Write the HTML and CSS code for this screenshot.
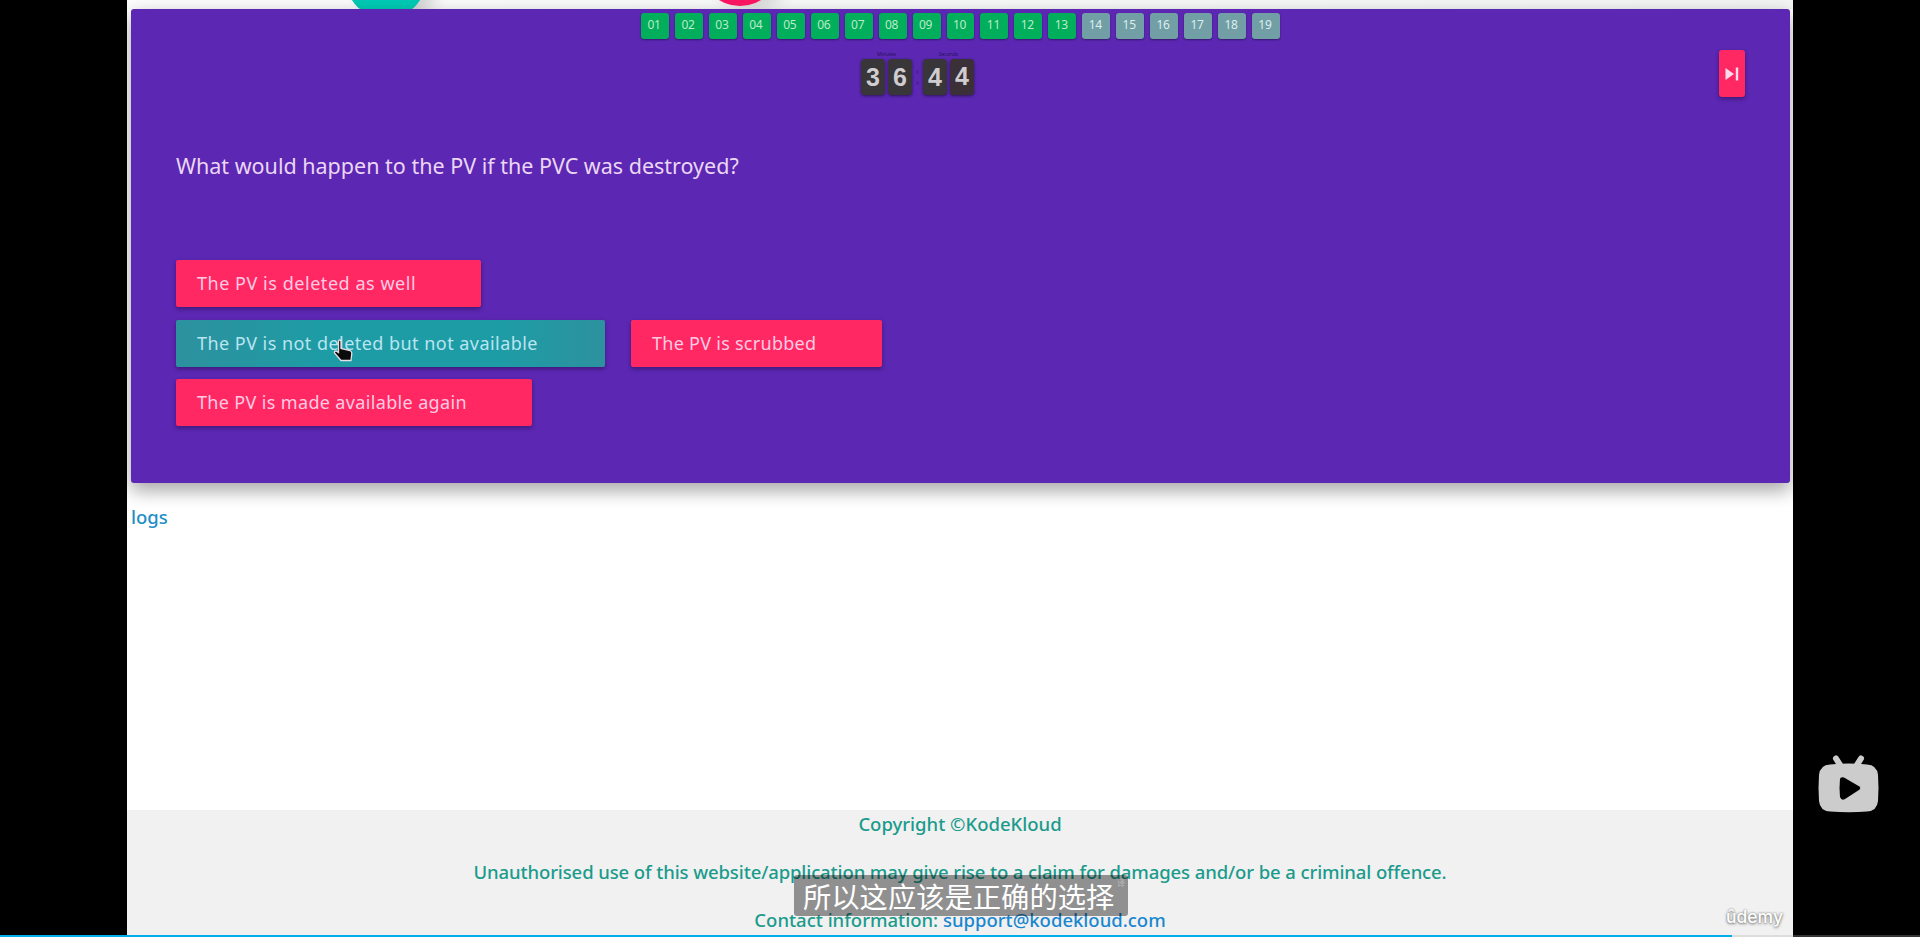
FILE: index.html
```html
<!DOCTYPE html>
<html lang="en">
<head>
<meta charset="utf-8">
<title>Quiz</title>
<link rel="stylesheet" href="styles.css">
</head>
<body>
<div class="player">
  <main class="screen">
    <header class="top"><i class="bubble teal"></i><i class="bubble pink"></i></header>
    <section class="card">
      <nav class="steps">
        <span class="step">01</span><span class="step">02</span><span class="step">03</span><span class="step">04</span><span class="step">05</span><span class="step">06</span><span class="step">07</span><span class="step">08</span><span class="step">09</span><span class="step">10</span><span class="step">11</span><span class="step">12</span><span class="step">13</span><span class="step todo">14</span><span class="step todo">15</span><span class="step todo">16</span><span class="step todo">17</span><span class="step todo">18</span><span class="step todo">19</span>
      </nav>
      <div class="toolbar">
        <div class="clock">
          <div class="unit"><small>Minutes</small><div class="digits"><b>3</b><b>6</b></div></div>
          <div class="colon"><i></i><i></i></div>
          <div class="unit"><small>Seconds</small><div class="digits"><b>4</b><b class="flip">4</b></div></div>
        </div>
        <button class="skip" aria-label="Skip"><svg width="14" height="14" viewBox="0 0 14 14"><path d="M0.5 1v12L9 7zM10.8 0.5h2.4v13h-2.4z" fill="#ffd9ec"/></svg></button>
      </div>
      <h1 class="question">What would happen to the PV if the PVC was destroyed?</h1>
      <div class="answers">
        <div class="row"><button class="answer w1">The PV is deleted as well</button></div>
        <div class="row"><button class="answer w2 chosen">The PV is not deleted but not available</button><button class="answer w3">The PV is scrubbed</button></div>
        <div class="row"><button class="answer w4">The PV is made available again</button></div>
      </div>
    </section>
    <div class="logs"><a>logs</a></div>
    <footer class="footer">
      <p class="copy">Copyright ©KodeKloud</p>
      <p class="legal">Unauthorised use of this website/application may give rise to a claim for damages and/or be a criminal offence.</p>
      <p class="contact">Contact information: <a>support@kodekloud.com</a></p>
    </footer>
  </main>
  <svg class="cursor" width="20" height="26" viewBox="0 0 20 26"><path d="M5.500 2.500Q5.500 1 6.700 1T8 2.500V9.500L17 11.500Q19 12.300 18.800 14.500L18 21.500H8L1.500 14Q1 12 3 12L5.500 13.500z" fill="#0b0b0b" stroke="#e8dfe6" stroke-width="1.300"/></svg>
  <svg class="tv" width="62" height="58" viewBox="0 0 62 58"><g fill="#ccc"><path d="M18 3.500L24 13M43 3.500L37 13" stroke="#ccc" stroke-width="6" stroke-linecap="round"/><path d="M12 9.500Q31 7.500 49 9.500Q59 10 60 20Q61 33 60 46Q59 56 49 56.500Q31 58 12 56.500Q2 56 1 46Q0 33 1 20Q2 10 12 9.500z"/></g><path d="M22 24Q22.500 21.500 26 22.500L41 31.200Q43.500 33 41 35L27 44Q23.500 46 22 42Q21 33 22 24z" fill="#000"/></svg>
  <div class="udemy">ûdemy</div>
  <div class="subtitle">所以这应该是正确的选择<sup>译</sup></div>
  <div class="progress"><i></i></div>
</div>
</body>
</html>
```
FILE: styles.css
```css
* { box-sizing: border-box; }
body { margin: 0; background: #000; font-family: "Noto Sans", sans-serif; }
button { border: 0; font-family: inherit; }
.player { position: relative; width: 1920px; height: 937px; overflow: hidden; background: #000; }
.screen { width: 1666px; height: 937px; margin-left: 127px; background: #fff; overflow: hidden; display: flex; flex-direction: column; }
.top { position: relative; height: 9px; flex: none; background: linear-gradient(90deg, #fdfdfd, #f3f5f5); }
.bubble { position: absolute; width: 80px; height: 80px; border-radius: 50%; box-shadow: 12px 2px 16px rgba(0,0,0,.16); }
.teal { left: 219px; top: -61px; background: #00cbb5; }
.pink { left: 573px; top: -74px; background: #ff1764; }
.card { position: relative; flex: none; height: 474px; margin: 0 3px 0 4px; padding-top: 4px; border-radius: 3px; background: #5b27b3; box-shadow: 0 8px 17px rgba(0,0,0,.2), 0 6px 20px rgba(0,0,0,.19); }
.steps { display: flex; justify-content: center; gap: 6px; padding-right: 0; }
.step { width: 27.950px; height: 26px; border-radius: 3px; background: #00ae5c; color: #bcebc7; font-size: 12px; letter-spacing: -.3px; line-height: 24px; text-align: center; padding-right: 2px; box-shadow: 0 1px 2px rgba(0,0,0,.4); }
.todo { background: #719fa5; color: #dceeee; }
.toolbar { display: flex; justify-content: space-between; margin: 11px 45px 0 730px; height: 47px; }
.clock { display: flex; }
.unit small { display: block; height: 9px; font-size: 5px; line-height: 8px; text-align: center; color: #2c125f; }
.unit { width: 51px; }
.digits { display: flex; gap: 3px; }
.digits b { width: 24px; height: 36px; border-radius: 4px; background: #393639; color: #d0cdd1; font: bold 25px/36px "Liberation Sans", sans-serif; text-align: center; box-shadow: 0 1px 3px rgba(0,0,0,.5); }
.digits .flip { background: #3c3038; line-height: 34px; }
.colon { width: 11px; padding-top: 20px; display: flex; flex-direction: column; align-items: center; gap: 7px; }
.colon i { width: 3px; height: 4px; border-radius: 50%; background: #521f9c; }
.skip { width: 26px; height: 47px; padding: 0; border-radius: 3px; background: #ff2863; display: flex; align-items: center; justify-content: center; box-shadow: 0 2px 4px rgba(0,0,0,.35); }
.question { margin: 53px 0 0 45px; height: 32px; font-size: 21.500px; line-height: 32px; font-weight: 400; color: #ecd6f4; letter-spacing: 0; white-space: nowrap; }
.answers { margin: 78px 0 0 45px; display: flex; flex-direction: column; gap: 12.600px; }
.row { display: flex; gap: 26px; }
.answer { height: 47px; padding: 0 0 1px 21px; border-radius: 2px; background: #ff2863; color: #ffcbe2; font-size: 18px; text-align: left; white-space: nowrap; box-shadow: 0 2px 4px rgba(0,0,0,.35); }
.w1 { width: 305px; letter-spacing: .54px; }
.w2 { width: 429px; letter-spacing: .46px; }
.w3 { width: 251px; letter-spacing: .27px; }
.w4 { width: 356px; letter-spacing: .35px; }
.chosen { background: linear-gradient(90deg, #2d919e, #1d9ca5 35%, #1d9ca5 75%, #2d929f); color: #b9e5f1; }
.logs { height: 327px; padding: 19px 0 0 4px; font-size: 18.500px; line-height: 30px; font-weight: 500; color: #1f8fc6; flex: none; }
.footer { flex: 1; background: #f1f1f1; color: #1a9b8c; font-size: 18.500px; font-weight: 500; text-align: center; }
.footer p { margin: 0 0 18px; line-height: 30px; white-space: nowrap; position: relative; top: -1px; }
.footer a { color: #1a87cf; }
.legal { letter-spacing: -.105px; }
.cursor { position: absolute; left: 333px; top: 339px; }
.tv { position: absolute; left: 1817.500px; top: 755px; }
.udemy { position: absolute; left: 1726px; top: 904px; font: 500 17.500px/26px "Inter", sans-serif; color: #fff; text-shadow: 0 1px 3px #777, 0 0 2px #888; }
.subtitle { position: absolute; left: 794px; top: 875px; width: 334px; height: 41px; padding-left: 9px; border-radius: 3px; background: rgba(0,0,0,.4); color: #fff; font: 28.300px/42px "Noto Sans CJK SC", sans-serif; white-space: nowrap; }
.subtitle sup { position: absolute; right: 3px; top: 3px; font-size: 8px; line-height: 10px; opacity: .35; }
.progress { position: absolute; left: 0; right: 0; top: 935px; height: 2px; background: linear-gradient(90deg, #ddd 1793px, #333 1793px); }
.progress i { display: block; width: 1732px; height: 2px; background: #00aeec; }
```
